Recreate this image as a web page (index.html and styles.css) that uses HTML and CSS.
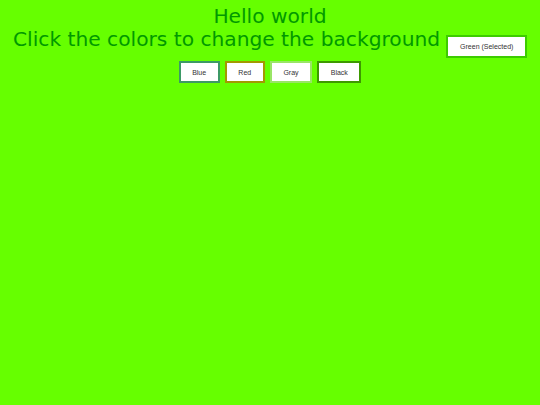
FILE: index.html
```html
<!DOCTYPE html>
<html>
<head>
<meta charset="utf-8">
<link rel="stylesheet" href="styles.css">
</head>
<body>
<div class="page">
  <div class="title">Hello world</div>
  <div class="title">Click the colors to change the background <button class="btn btn-green">Green (Selected)</button></div>
  <div class="row">
    <button class="btn btn-blue">Blue</button>
    <button class="btn btn-red">Red</button>
    <button class="btn btn-gray">Gray</button>
    <button class="btn btn-black">Black</button>
  </div>
</div>
</body>
</html>
```
FILE: styles.css
```css
html, body {
  margin: 0;
  padding: 0;
  background: #66ff00;
}
.page {
  padding-top: 5px;
  text-align: center;
  font-family: "DejaVu Sans", sans-serif;
  color: #009900;
}
.title {
  font-size: 20.2px;
  line-height: 23px;
}
.row {
  display: flex;
  justify-content: center;
  gap: 5px;
  margin-top: 3px;
}
.btn {
  font-family: "Liberation Sans", Arial, sans-serif;
  font-size: 7px;
  color: #333;
  background: #fff;
  background-clip: padding-box;
  height: 22px;
  padding: 0 11.6px;
  border: 2px solid;
  margin: 0;
}
.btn-green {
  height: 23px;
  vertical-align: -3px;
  border-color: rgba(0, 128, 0, 0.4);
}
.btn-blue { border-color: rgba(0, 0, 255, 0.4); }
.btn-red { border-color: rgba(255, 0, 0, 0.4); }
.btn-gray { border-color: rgba(204, 204, 204, 0.5); }
.btn-black { border-color: rgba(0, 0, 0, 0.4); }
```
